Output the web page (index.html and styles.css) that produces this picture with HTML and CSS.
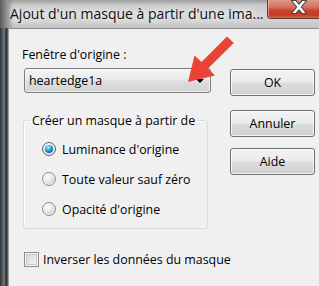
FILE: index.html
```html
<!DOCTYPE html>
<html lang="fr">
<head>
<meta charset="utf-8">
<link rel="stylesheet" href="styles.css">
</head>
<body>
<div class="window">
  <div class="titlebar">
    <span class="title">Ajout d'un masque à partir d'une ima...</span>
    <div class="close">
      <svg class="close-x" width="20" height="16" viewBox="0 0 20 16">
        <path d="M2.5 0.5 L7 0.5 L10 4.2 L13 0.5 L17.5 0.5 L12.3 7 L17.5 13.5 L13 13.5 L10 9.8 L7 13.5 L2.5 13.5 L7.7 7 Z" fill="#ffffff" stroke="#4a4a4a" stroke-width="1.2" stroke-linejoin="round"/>
      </svg>
    </div>
  </div>
  <div class="frame">
    <div class="frame-left"></div>
    <div class="client">
      <div class="top">
        <div class="left-col">
          <div class="lbl">Fenêtre d'origine :</div>
          <div class="combo"><span class="combo-text">heartedge1a</span><span class="caret"></span></div>
          <fieldset class="group">
            <legend class="legend">Créer un masque à partir de</legend>
            <label class="radio-row"><span class="rb rb-on"><span class="rb-dot"></span></span>Luminance d'origine</label>
            <label class="radio-row"><span class="rb"></span>Toute valeur sauf zéro</label>
            <label class="radio-row"><span class="rb"></span>Opacité d'origine</label>
          </fieldset>
        </div>
        <div class="btns">
          <div class="btn btn-ok">OK</div>
          <div class="btn btn-cancel">Annuler</div>
          <div class="btn btn-help">Aide</div>
        </div>
      </div>
      <label class="check-row"><span class="cb"></span>Inverser les données du masque</label>
    </div>
  </div>
  <svg class="arrow" width="319" height="286" viewBox="0 0 319 286">
    <polygon points="188,82 194.5,55.5 201.5,62 227,36.5 233.8,43 208,68.5 215,75.5" fill="#ea4336"/>
  </svg>
</div>
</body>
</html>
```

FILE: styles.css
```css
html, body {
  margin: 0;
  padding: 0;
}
body {
  font-family: "Open Sans", "Noto Sans", "DejaVu Sans", sans-serif;
  font-size: 12.4px;
  color: #000;
  background: #f0f0f0;
}
.window {
  position: relative;
  width: 319px;
  height: 286px;
  display: flex;
  flex-direction: column;
  overflow: hidden;
}
.titlebar {
  height: 28px;
  flex: none;
  display: flex;
  align-items: flex-start;
  background:
    linear-gradient(90deg, #5a5a5a 0, #8c8c8c 6px, rgba(200,200,200,0) 14px),
    linear-gradient(180deg, #9d9d9d 0, #c9c9c9 5px, #d6d6d6 14px, #cfcfcf 22px, #c3c3c3 28px);
}
.title {
  flex: 1;
  min-width: 0;
  overflow: hidden;
  margin: 4px 0 0 10px;
  font-size: 14px;
  line-height: 20px;
  white-space: nowrap;
  color: #101010;
  text-shadow: 0 0 6px #f4f4f4, 0 0 10px #ffffff;
}
.close {
  flex: none;
  width: 52px;
  height: 19px;
  box-sizing: border-box;
  border: 1px solid #5b3a34;
  border-top: none;
  border-right: none;
  border-radius: 0 0 0 4px;
  background: linear-gradient(180deg, #dc9a8c 0, #d4715e 40%, #c5402a 60%, #c83c24 85%, #d86a4f 100%);
  box-shadow: inset 1px 0 0 rgba(255,220,210,0.5);
  position: relative;
}
.close-x {
  position: absolute;
  left: 21px;
  top: 0;
}
.frame {
  flex: 1;
  display: flex;
  min-height: 0;
}
.frame-left {
  width: 8px;
  flex: none;
  background: linear-gradient(90deg, #2e2e2e 0, #4c535a 2px, #6d7780 4px, #3a3d40 6px, #1e1e1e 7px, #9a9a9a 8px);
}
.client {
  flex: 1;
  background: #f0f0f0;
  border-top: 1px solid #8a8a8a;
  border-left: 1px solid #9a9a9a;
  display: flex;
  flex-direction: column;
}
.top {
  display: flex;
  align-items: flex-start;
}
.left-col {
  padding: 17px 0 0 14px;
  width: 187px;
  flex: none;
}
.lbl {
  line-height: 17px;
  margin-left: -1px;
}
.combo {
  margin: 5px 0 0 1px;
  width: 187px;
  height: 25px;
  box-sizing: border-box;
  border: 1px solid #7c7c7c;
  border-radius: 3px;
  background: linear-gradient(180deg, #f3f3f3 0, #ebebeb 45%, #dddddd 55%, #d2d2d2 100%);
  box-shadow: inset 0 0 0 1px rgba(255,255,255,0.6);
  display: flex;
  align-items: center;
  padding-left: 4px;
}
.combo-text {
  line-height: 17px;
  flex: 1;
}
.caret {
  width: 0;
  height: 0;
  border-left: 4px solid transparent;
  border-right: 4px solid transparent;
  border-top: 4px solid #000;
  margin-right: 6px;
  margin-top: 1px;
}
.group {
  margin: 19px 0 0 0;
  width: 185px;
  box-sizing: border-box;
  border: 1px solid #d5dbe0;
  border-radius: 3px;
  padding: 5px 0 4px 6px;
  box-shadow: inset 1px 1px 0 #ffffff;
}
.legend {
  padding: 0 2px;
  line-height: 17px;
}
.radio-row {
  display: flex;
  align-items: center;
  height: 30px;
  padding-left: 12px;
}
.rb {
  width: 14px;
  height: 14px;
  box-sizing: border-box;
  border-radius: 50%;
  border: 1px solid #8b8c8d;
  background: radial-gradient(circle at 40% 35%, #ffffff 0, #eeeeee 30%, #cdcdcd 75%, #bdbdbd 100%);
  box-shadow: inset 0 0 0 1px rgba(255,255,255,0.7);
  margin-right: 6px;
  display: flex;
  align-items: center;
  justify-content: center;
  flex: none;
}
.rb-on {
  border-color: #56616b;
}
.rb-dot {
  width: 8px;
  height: 8px;
  border-radius: 50%;
  background: radial-gradient(circle at 40% 30%, #b8ecff 0, #2fa4e0 40%, #0a5e9e 80%, #0a4a80 100%);
}
.btns {
  margin-left: 20px;
  display: flex;
  flex-direction: column;
  padding-top: 40px;
}
.btn {
  width: 85px;
  height: 27px;
  box-sizing: border-box;
  border: 1px solid #707070;
  border-radius: 3px;
  background: linear-gradient(180deg, #f2f2f2 0, #ebebeb 48%, #dddddd 52%, #cfcfcf 100%);
  box-shadow: inset 0 0 0 1px rgba(255,255,255,0.75);
  display: flex;
  align-items: center;
  justify-content: center;
  line-height: 17px;
}
.btn-cancel {
  margin-top: 14px;
}
.btn-help {
  margin-top: 11px;
}
.check-row {
  display: flex;
  align-items: center;
  margin: 22px 0 0 15px;
  line-height: 17px;
}
.cb {
  width: 15px;
  height: 15px;
  box-sizing: border-box;
  border: 1px solid #8e8f8f;
  background: linear-gradient(135deg, #cfcfcf 0, #e6e6e6 50%, #f7f7f7 100%);
  box-shadow: inset 0 0 0 1px #f4f4f4, inset 0 0 0 2px #c8c8c8;
  margin-right: 4px;
  flex: none;
}
.arrow {
  position: absolute;
  left: 0;
  top: 0;
  pointer-events: none;
}
```
